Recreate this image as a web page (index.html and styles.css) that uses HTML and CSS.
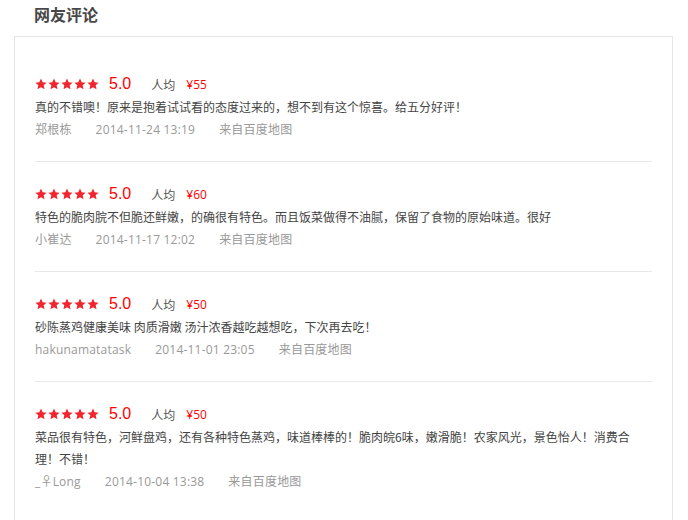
FILE: index.html
```html
<!DOCTYPE html>
<html lang="zh-CN">
<head>
<meta charset="utf-8">
<title>网友评论</title>
<link rel="stylesheet" href="styles.css">
</head>
<body>
<svg width="0" height="0" class="defs" aria-hidden="true">
  <defs>
    <symbol id="star" viewBox="0 0 24 24">
      <path d="M12 1.2l3.3 7.2 7.9 0.9-5.9 5.4 1.7 7.8L12 18.5l-7 4 1.7-7.8L0.8 9.3l7.9-0.9z"/>
    </symbol>
  </defs>
</svg>
<div class="page">
  <h2 class="title">网友评论</h2>
  <div class="box">
    <div class="item">
      <div class="rating">
        <span class="stars"><svg><use href="#star"/></svg><svg><use href="#star"/></svg><svg><use href="#star"/></svg><svg><use href="#star"/></svg><svg><use href="#star"/></svg></span>
        <span class="score">5.0</span>
        <span class="avg-label">人均</span>
        <span class="price">¥55</span>
      </div>
      <p class="text">真的不错噢！原来是抱着试试看的态度过来的，想不到有这个惊喜。给五分好评！</p>
      <div class="meta"><span>郑根栋</span><span>2014-11-24 13:19</span><span>来自百度地图</span></div>
    </div>
    <div class="item">
      <div class="rating">
        <span class="stars"><svg><use href="#star"/></svg><svg><use href="#star"/></svg><svg><use href="#star"/></svg><svg><use href="#star"/></svg><svg><use href="#star"/></svg></span>
        <span class="score">5.0</span>
        <span class="avg-label">人均</span>
        <span class="price">¥60</span>
      </div>
      <p class="text">特色的脆肉脘不但脆还鲜嫩，的确很有特色。而且饭菜做得不油腻，保留了食物的原始味道。很好</p>
      <div class="meta"><span>小崔达</span><span>2014-11-17 12:02</span><span>来自百度地图</span></div>
    </div>
    <div class="item">
      <div class="rating">
        <span class="stars"><svg><use href="#star"/></svg><svg><use href="#star"/></svg><svg><use href="#star"/></svg><svg><use href="#star"/></svg><svg><use href="#star"/></svg></span>
        <span class="score">5.0</span>
        <span class="avg-label">人均</span>
        <span class="price">¥50</span>
      </div>
      <p class="text">砂陈蒸鸡健康美味 肉质滑嫩 汤汁浓香越吃越想吃，下次再去吃！</p>
      <div class="meta"><span>hakunamatatask</span><span>2014-11-01 23:05</span><span>来自百度地图</span></div>
    </div>
    <div class="item">
      <div class="rating">
        <span class="stars"><svg><use href="#star"/></svg><svg><use href="#star"/></svg><svg><use href="#star"/></svg><svg><use href="#star"/></svg><svg><use href="#star"/></svg></span>
        <span class="score">5.0</span>
        <span class="avg-label">人均</span>
        <span class="price">¥50</span>
      </div>
      <p class="text">菜品很有特色，河鲜盘鸡，还有各种特色蒸鸡，味道棒棒的！脆肉皖6味，嫩滑脆！农家风光，景色怡人！消费合理！不错！</p>
      <div class="meta"><span>_♀Long</span><span>2014-10-04 13:38</span><span>来自百度地图</span></div>
    </div>
  </div>
</div>
</body>
</html>
```
FILE: styles.css
```css
* { box-sizing: border-box; }
html, body { margin: 0; padding: 0; background: #fff; }
body {
  font-family: "Noto Sans CJK SC", "Liberation Sans", sans-serif;
  font-size: 12px;
  color: #444;
  text-spacing-trim: space-all;
}
.defs { position: absolute; width: 0; height: 0; }
.page { padding: 0 15px 0 14px; }
.title {
  margin: 0;
  padding: 3px 0 0 20px;
  height: 36px;
  font-size: 16px;
  font-weight: bold;
  line-height: 22px;
  color: #484848;
}
.box {
  border: 1px solid #e6e6e6;
  border-bottom: none;
  padding: 15px 20px 40px;
  min-height: 500px;
}
.item {
  padding: 21px 0 20px;
  border-bottom: 1px solid #e8e8e8;
}
.item:last-child { border-bottom: none; }
.rating {
  display: flex;
  align-items: center;
  height: 22px;
}
.stars { display: flex; gap: 1px; margin-right: 10px; }
.stars svg { width: 12px; height: 12px; fill: #f0252d; display: block; }
.score {
  color: #f00;
  font-size: 16px;
  font-family: "Liberation Sans", "Noto Sans CJK SC", sans-serif;
  margin-right: 20px;
}
.avg-label { color: #555; margin-right: 11px; }
.price { color: #f00; font-family: "Open Sans", "Noto Sans CJK SC", sans-serif; }
.text {
  margin: 1px 0 0;
  line-height: 22px;
  color: #444;
}
.meta {
  display: flex;
  gap: 24px;
  line-height: 23px;
  color: #999;
  font-family: "Open Sans", "Noto Sans CJK SC", sans-serif;
  letter-spacing: 0.2px;
}
```
